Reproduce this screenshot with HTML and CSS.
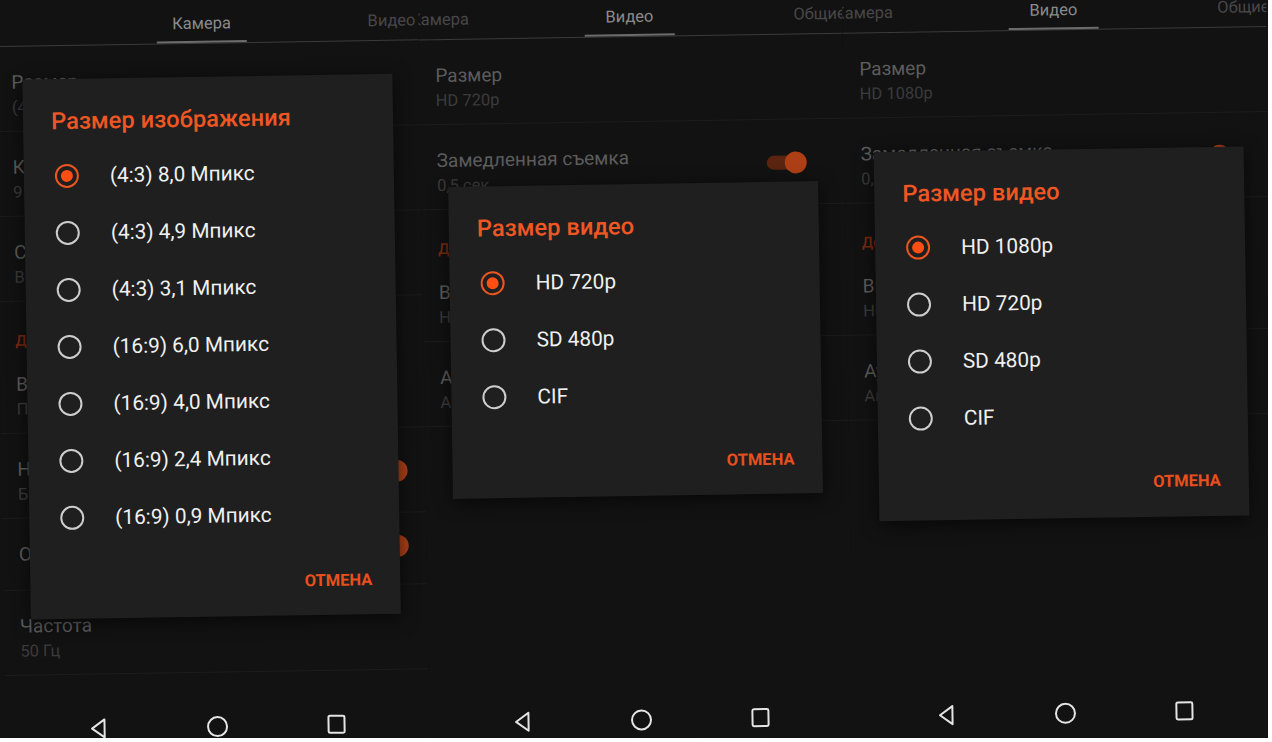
FILE: index.html
```html
<!DOCTYPE html>
<html lang="ru">
<head>
<meta charset="utf-8">
<title>Настройки камеры</title>
<link rel="stylesheet" href="styles.css">
</head>
<body>
<div class="stage">
  <div class="row">

    <section class="screen screen-1">
      <div class="tabs tabs-first">
        <div class="tab active"><span class="tab-label">Камера</span><span class="ind"></span></div>
        <div class="tab"><span class="tab-label">Видео</span></div>
        <div class="tab"><span class="tab-label">Общие</span></div>
      </div>
      <div class="list">
        <div class="item"><div class="txt"><div class="t">Размер</div><div class="s">(4:3) 8,0 Мпикс</div></div></div>
        <div class="item"><div class="txt"><div class="t">Качество</div><div class="s">95%</div></div></div>
        <div class="item"><div class="txt"><div class="t">Сетка</div><div class="s">Выкл.</div></div></div>
        <div class="header">Дополнительно</div>
        <div class="item"><div class="txt"><div class="t">Выдержка</div><div class="s">По умолчанию</div></div></div>
        <div class="item"><div class="txt"><div class="t">Непрерывная съемка</div><div class="s">Быстро</div></div><span class="toggle"></span></div>
        <div class="item single"><div class="txt"><div class="t">Отметка времени</div></div><span class="toggle"></span></div>
        <div class="item"><div class="txt"><div class="t">Частота</div><div class="s">50 Гц</div></div></div>
      </div>
      <div class="nav">
        <svg class="ico" width="20" height="22" viewBox="0 0 20 22"><path d="M16 2 L3.5 11 L16 20 Z"/></svg>
        <svg class="ico" width="22" height="22" viewBox="0 0 22 22"><circle cx="11" cy="11" r="9.5"/></svg>
        <svg class="ico" width="20" height="22" viewBox="0 0 20 22"><rect x="2" y="2" width="16" height="17" rx="1.5"/></svg>
      </div>
      <div class="overlay">
        <div class="dialog">
          <div class="dlg-title">Размер изображения</div>
          <div class="opts">
            <div class="opt"><span class="radio on"></span><span class="opt-label">(4:3) 8,0 Мпикс</span></div>
            <div class="opt"><span class="radio"></span><span class="opt-label">(4:3) 4,9 Мпикс</span></div>
            <div class="opt"><span class="radio"></span><span class="opt-label">(4:3) 3,1 Мпикс</span></div>
            <div class="opt"><span class="radio"></span><span class="opt-label">(16:9) 6,0 Мпикс</span></div>
            <div class="opt"><span class="radio"></span><span class="opt-label">(16:9) 4,0 Мпикс</span></div>
            <div class="opt"><span class="radio"></span><span class="opt-label">(16:9) 2,4 Мпикс</span></div>
            <div class="opt"><span class="radio"></span><span class="opt-label">(16:9) 0,9 Мпикс</span></div>
          </div>
          <div class="actions"><span class="cancel">ОТМЕНА</span></div>
        </div>
      </div>
    </section>

    <section class="screen">
      <div class="tabs tabs-shift">
        <div class="tab"><span class="tab-label">Камера</span></div>
        <div class="tab active"><span class="tab-label">Видео</span><span class="ind"></span></div>
        <div class="tab"><span class="tab-label">Общие</span></div>
      </div>
      <div class="list">
        <div class="item"><div class="txt"><div class="t">Размер</div><div class="s">HD 720p</div></div></div>
        <div class="item"><div class="txt"><div class="t">Замедленная съемка</div><div class="s">0,5 сек.</div></div><span class="toggle"></span></div>
        <div class="header">Дополнительно</div>
        <div class="item"><div class="txt"><div class="t">Видеостабилизация</div><div class="s">Нет</div></div></div>
        <div class="item"><div class="txt"><div class="t">Аудио</div><div class="s">Авто</div></div></div>
      </div>
      <div class="nav">
        <svg class="ico" width="20" height="22" viewBox="0 0 20 22"><path d="M16 2 L3.5 11 L16 20 Z"/></svg>
        <svg class="ico" width="22" height="22" viewBox="0 0 22 22"><circle cx="11" cy="11" r="9.5"/></svg>
        <svg class="ico" width="20" height="22" viewBox="0 0 20 22"><rect x="2" y="2" width="16" height="17" rx="1.5"/></svg>
      </div>
      <div class="overlay">
        <div class="dialog">
          <div class="dlg-title">Размер видео</div>
          <div class="opts">
            <div class="opt"><span class="radio on"></span><span class="opt-label">HD 720p</span></div>
            <div class="opt"><span class="radio"></span><span class="opt-label">SD 480p</span></div>
            <div class="opt"><span class="radio"></span><span class="opt-label">CIF</span></div>
          </div>
          <div class="actions"><span class="cancel">ОТМЕНА</span></div>
        </div>
      </div>
    </section>

    <section class="screen screen-3">
      <div class="tabs tabs-shift">
        <div class="tab"><span class="tab-label">Камера</span></div>
        <div class="tab active"><span class="tab-label">Видео</span><span class="ind"></span></div>
        <div class="tab"><span class="tab-label">Общие</span></div>
      </div>
      <div class="list">
        <div class="item"><div class="txt"><div class="t">Размер</div><div class="s">HD 1080p</div></div></div>
        <div class="item"><div class="txt"><div class="t">Замедленная съемка</div><div class="s">0,5 сек.</div></div><span class="toggle"></span></div>
        <div class="header">Дополнительно</div>
        <div class="item"><div class="txt"><div class="t">Видеостабилизация</div><div class="s">Нет</div></div></div>
        <div class="item"><div class="txt"><div class="t">Аудио</div><div class="s">Авто</div></div></div>
      </div>
      <div class="nav">
        <svg class="ico" width="20" height="22" viewBox="0 0 20 22"><path d="M16 2 L3.5 11 L16 20 Z"/></svg>
        <svg class="ico" width="22" height="22" viewBox="0 0 22 22"><circle cx="11" cy="11" r="9.5"/></svg>
        <svg class="ico" width="20" height="22" viewBox="0 0 20 22"><rect x="2" y="2" width="16" height="17" rx="1.5"/></svg>
      </div>
      <div class="overlay">
        <div class="dialog">
          <div class="dlg-title">Размер видео</div>
          <div class="opts">
            <div class="opt"><span class="radio on"></span><span class="opt-label">HD 1080p</span></div>
            <div class="opt"><span class="radio"></span><span class="opt-label">HD 720p</span></div>
            <div class="opt"><span class="radio"></span><span class="opt-label">SD 480p</span></div>
            <div class="opt"><span class="radio"></span><span class="opt-label">CIF</span></div>
          </div>
          <div class="actions"><span class="cancel">ОТМЕНА</span></div>
        </div>
      </div>
    </section>

  </div>
</div>
</body>
</html>
```

FILE: styles.css
```css
html, body {
  margin: 0;
  padding: 0;
  background: #ffffff;
}

body {
  font-family: Roboto, "Noto Sans", "Liberation Sans", sans-serif;
}

.stage {
  width: 1268px;
  height: 738px;
  overflow: hidden;
  background: #121212;
}

.row {
  display: flex;
  width: 1272px;
  height: 738px;
  transform: rotate(-0.9deg);
  transform-origin: 636px 369px;
}

.screen {
  position: relative;
  flex: 0 0 424px;
  height: 738px;
  overflow: hidden;
  display: flex;
  flex-direction: column;
  background: #121212;
}

/* Tabs */
.tabs {
  flex: none;
  display: flex;
  height: 36px;
  border-bottom: 1px solid #3b3b3b;
}

.tabs-first {
  padding-left: 112px;
}

.tabs-shift {
  margin-left: -74px;
}

.tab {
  flex: 0 0 190px;
  display: flex;
  flex-direction: column;
  align-items: center;
}

.tab-label {
  display: block;
  height: 34px;
  line-height: 34px;
  font-size: 16.5px;
  color: #474747;
}

.tab.active .tab-label {
  color: #8a8a8a;
}

.ind {
  display: block;
  width: 90px;
  height: 2px;
  background: #6c6c6c;
}

/* Settings list (dimmed behind dialog) */
.list {
  display: flex;
  flex-direction: column;
}

.item {
  display: flex;
  justify-content: space-between;
  align-items: flex-start;
  height: 85px;
  box-sizing: border-box;
  padding: 24px 42px 0 16px;
  border-bottom: 1px solid #1c1c1c;
}

.screen-1 .item {
  padding-right: 22px;
}

.item.single {
  height: 72px;
}

.t {
  font-size: 19px;
  line-height: 24px;
  color: #5c5c5c;
  white-space: nowrap;
}

.s {
  font-size: 16.5px;
  line-height: 26px;
  color: #3b3b3b;
  white-space: nowrap;
}

.header {
  height: 47px;
  box-sizing: border-box;
  padding: 29px 16px 0;
  font-size: 15px;
  line-height: 20px;
  font-weight: 500;
  color: #7a2a10;
}

.toggle {
  flex: none;
  margin-top: 12px;
  width: 36px;
  height: 14px;
  border-radius: 7px;
  background: #5a2410;
  display: flex;
  justify-content: flex-end;
  align-items: center;
}

.item.single .toggle {
  margin-top: 2px;
}

.toggle::after {
  content: "";
  width: 22px;
  height: 22px;
  border-radius: 50%;
  background: #ad3f17;
  margin-right: -4px;
}

/* Navigation bar */
.nav {
  margin-top: auto;
  flex: none;
  height: 36px;
  display: flex;
  justify-content: center;
  align-items: center;
  gap: 98px;
}

.ico {
  display: block;
  fill: none;
  stroke: #e4e4e4;
  stroke-width: 2;
  stroke-linejoin: round;
}

/* Dialog */
.overlay {
  position: absolute;
  top: 0;
  left: 0;
  right: 0;
  bottom: 58px;
  display: flex;
  align-items: center;
  justify-content: center;
}

.screen-3 .overlay {
  padding-left: 4px;
}

.dialog {
  width: 370px;
  box-sizing: border-box;
  padding: 28px 28px 17px;
  background: #1f1f1f;
  box-shadow: 0 4px 18px rgba(0, 0, 0, 0.6);
}

.dlg-title {
  font-size: 23.7px;
  line-height: 28px;
  font-weight: 500;
  color: #ee5723;
  white-space: nowrap;
}

.opts {
  margin-top: 12px;
}

.opt {
  height: 57px;
  display: flex;
  align-items: center;
}

.radio {
  flex: none;
  width: 24px;
  height: 24px;
  box-sizing: border-box;
  border: 2px solid #cdcdcd;
  border-radius: 50%;
  margin: 0 31px 0 3px;
  display: flex;
  align-items: center;
  justify-content: center;
}

.radio.on {
  border: 2.5px solid #e9561f;
}

.radio.on::after {
  content: "";
  width: 12px;
  height: 12px;
  border-radius: 50%;
  background: #ff4e14;
}

.opt-label {
  font-size: 20.8px;
  color: #f0f0f0;
  white-space: nowrap;
}

.actions {
  margin-top: 20px;
  height: 36px;
  display: flex;
  justify-content: flex-end;
  align-items: center;
}

.cancel {
  font-size: 16.5px;
  font-weight: 700;
  color: #e8501e;
}
```
